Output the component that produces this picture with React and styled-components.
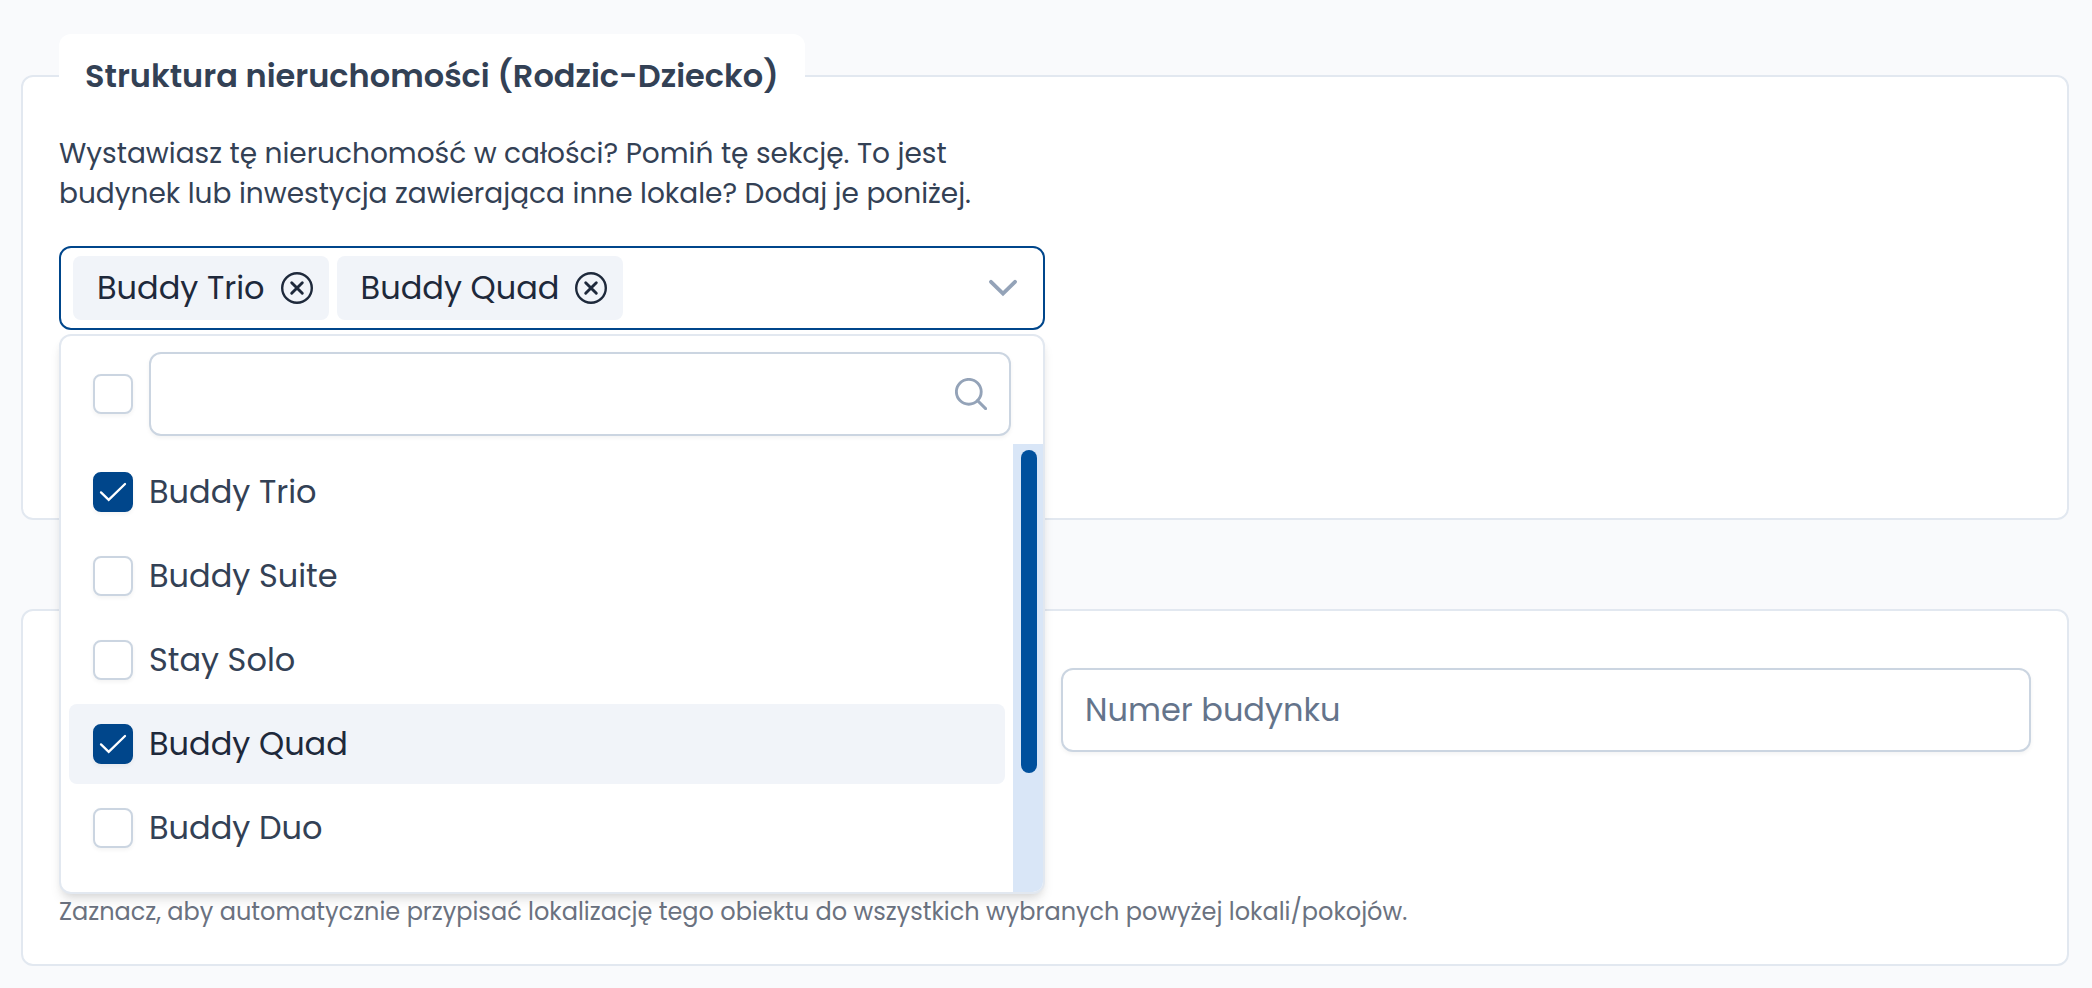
import React, { useState } from "react";
import styled, { createGlobalStyle, css } from "styled-components";

const c = {
  page: "#f9fafc",
  card: "#ffffff",
  line: "#e2e8f0",
  field: "#cbd5e1",
  primary: "#00468b",
  thumb: "#00509d",
  track: "#d9e6f7",
  soft: "#f1f4f9",
  text: "#334155",
  strong: "#1e293b",
  muted: "#64748b",
  help: "#6b7280",
  icon: "#94a3b8",
};

const GlobalStyle = createGlobalStyle`
  *, *::before, *::after { box-sizing: border-box; }
  body {
    margin: 0;
    background: ${c.page};
    color: ${c.text};
    font-family: Poppins, Inter, "Liberation Sans", sans-serif;
    font-size: 32px;
    line-height: 48px;
  }
  input, button { font: inherit; color: inherit; }
`;

const Page = styled.main`
  display: flex;
  flex-direction: column;
  gap: 89px;
  padding: 34px 23px 22px 21px;
`;

const cardFrame = css`
  margin: 0;
  min-width: 0;
  background: ${c.card};
  border: 2px solid ${c.line};
  border-radius: 12px;
`;

const Fieldset = styled.fieldset`
  ${cardFrame}
  padding: 16px 36px 36px;
`;

const Legend = styled.legend`
  padding: 18px 26px;
  border-radius: 12px;
  background: ${c.card};
  font-weight: 600;
`;

const StructureBody = styled.div`
  display: flex;
  flex-direction: column;
  gap: 32px;
  width: 50%;
  min-height: 348px;
`;

const Intro = styled.p`
  margin: 0;
  font-size: 28px;
  line-height: 40px;
`;

const MultiSelect = styled.div`
  position: relative;
`;

const SelectBox = styled.div`
  display: flex;
  align-items: center;
  height: 84px;
  padding-left: 12px;
  border: 2px solid ${c.primary};
  border-radius: 12px;
  background: ${c.card};
`;

const Chips = styled.div`
  display: flex;
  flex: 1;
  gap: 8px;
`;

const Chip = styled.span`
  display: flex;
  align-items: center;
  gap: 16px;
  padding: 8px 16px 8px 24px;
  border-radius: 8px;
  background: ${c.soft};
  color: ${c.strong};
  white-space: nowrap;
`;

const IconButton = styled.button`
  display: flex;
  align-items: center;
  justify-content: center;
  width: ${(p) => p.$width};
  padding: 0;
  border: 0;
  background: none;
  color: ${(p) => p.$color};
  cursor: pointer;
`;

const Panel = styled.div`
  position: absolute;
  z-index: 2;
  top: 100%;
  left: 0;
  right: 0;
  margin-top: 4px;
  overflow: hidden;
  border: 2px solid ${c.line};
  border-radius: 12px;
  background: ${c.card};
  box-shadow: 0 8px 12px -2px rgba(0, 0, 0, 0.1), 0 4px 8px -4px rgba(0, 0, 0, 0.1);
`;

const PanelHeader = styled.div`
  display: flex;
  align-items: center;
  gap: 16px;
  padding: 16px 32px 8px;
`;

const TextInput = styled.input`
  width: 100%;
  height: 84px;
  padding: 0 22px;
  border: 2px solid ${c.field};
  border-radius: 12px;
  background: ${c.card};
  box-shadow: 0 2px 4px rgba(18, 18, 23, 0.05);
  outline: none;

  &::placeholder {
    color: ${c.muted};
    opacity: 1;
  }
`;

const SearchField = styled.div`
  display: grid;
  flex: 1;
  align-items: center;

  > * { grid-area: 1 / 1; }

  > svg {
    justify-self: end;
    margin-right: 24px;
    color: ${c.icon};
    pointer-events: none;
  }
`;

const ListArea = styled.div`
  display: flex;
  height: 448px;
`;

const Options = styled.ul`
  display: flex;
  flex: 1;
  flex-direction: column;
  gap: 4px;
  margin: 0;
  padding: 8px;
  list-style: none;
`;

const Option = styled.label`
  display: flex;
  align-items: center;
  gap: 16px;
  height: 80px;
  padding: 0 24px;
  border-radius: 8px;
  background: ${(p) => (p.$focused ? c.soft : "transparent")};
  color: ${(p) => (p.$focused ? c.strong : c.text)};
  cursor: pointer;
`;

const Track = styled.div`
  width: 30px;
  padding: 6px 6px 6px 8px;
  background: ${c.track};
`;

const Thumb = styled.div`
  height: 74%;
  border-radius: 8px;
  background: ${c.thumb};
`;

const TickFrame = styled.span`
  display: grid;
  flex: none;
  place-items: center;

  > * { grid-area: 1 / 1; }

  > svg {
    color: ${c.card};
    pointer-events: none;
  }
`;

const Tick = styled.input`
  appearance: none;
  width: 40px;
  height: 40px;
  margin: 0;
  border: 2px solid ${c.field};
  border-radius: 8px;
  background: ${c.card};
  box-shadow: 0 2px 4px rgba(18, 18, 23, 0.05);
  cursor: pointer;

  &:checked {
    border-color: ${c.primary};
    background: ${c.primary};
  }
`;

const AddressCard = styled.section`
  ${cardFrame}
  padding: 57px 36px 34px;
`;

const FieldGrid = styled.div`
  display: grid;
  grid-template-columns: 1fr 1fr;
  gap: 32px;
`;

const SecondColumn = styled.div`
  grid-column: 2;
`;

const Help = styled.p`
  margin: 142px 0 0;
  color: ${c.help};
  font-size: 24px;
  line-height: 36px;
`;

const svgProps = {
  fill: "none",
  stroke: "currentColor",
  strokeLinecap: "round",
  "aria-hidden": true,
};

const RemoveIcon = () => (
  <svg width="32" height="32" viewBox="0 0 32 32" {...svgProps}>
    <circle cx="16" cy="16" r="14.8" strokeWidth="2.4" />
    <path d="M10.7 10.7 21.3 21.3M21.3 10.7 10.7 21.3" strokeWidth="2.9" />
  </svg>
);

const ChevronIcon = () => (
  <svg width="28" height="28" viewBox="0 0 28 28" {...svgProps} strokeWidth="3.8">
    <path d="M2 7.8 14 19.6 26 7.8" />
  </svg>
);

const SearchIcon = () => (
  <svg width="32" height="32" viewBox="0 0 32 32" {...svgProps} strokeWidth="2.9">
    <circle cx="13.8" cy="13.8" r="12.4" />
    <path d="M22.6 22.6 30.6 30.6" />
  </svg>
);

const CheckIcon = () => (
  <svg width="28" height="28" viewBox="0 0 28 28" {...svgProps} strokeWidth="2.3">
    <path d="M2 14.4 9.7 21.8 26 6" />
  </svg>
);

function Checkbox(props) {
  return (
    <TickFrame>
      <Tick type="checkbox" {...props} />
      {props.checked && <CheckIcon />}
    </TickFrame>
  );
}

const units = ["Buddy Trio", "Buddy Suite", "Stay Solo", "Buddy Quad", "Buddy Duo"];

export default function App() {
  const [selected, setSelected] = useState(["Buddy Trio", "Buddy Quad"]);
  const [open, setOpen] = useState(true);
  const [focused, setFocused] = useState("Buddy Quad");

  const toggle = (unit) => {
    setFocused(unit);
    setSelected((list) =>
      list.includes(unit) ? list.filter((u) => u !== unit) : [...list, unit]
    );
  };
  const all = selected.length === units.length;

  return (
    <>
      <GlobalStyle />
      <Page>
        <Fieldset>
          <Legend>Struktura nieruchomości (Rodzic-Dziecko)</Legend>
          <StructureBody>
            <Intro>
              Wystawiasz tę nieruchomość w całości? Pomiń tę sekcję. To jest
              budynek lub inwestycja zawierająca inne lokale? Dodaj je poniżej.
            </Intro>
            <MultiSelect>
              <SelectBox>
                <Chips>
                  {selected.map((unit) => (
                    <Chip key={unit}>
                      {unit}
                      <IconButton
                        type="button"
                        $width="32px"
                        $color={c.strong}
                        aria-label={`Usuń ${unit}`}
                        onClick={() => toggle(unit)}
                      >
                        <RemoveIcon />
                      </IconButton>
                    </Chip>
                  ))}
                </Chips>
                <IconButton
                  type="button"
                  $width="80px"
                  $color={c.icon}
                  aria-label="Lista lokali"
                  aria-expanded={open}
                  onClick={() => setOpen(!open)}
                >
                  <ChevronIcon />
                </IconButton>
              </SelectBox>
              {open && (
                <Panel>
                  <PanelHeader>
                    <Checkbox
                      aria-label="Zaznacz wszystkie"
                      checked={all}
                      onChange={() => setSelected(all ? [] : units)}
                    />
                    <SearchField>
                      <TextInput type="text" aria-label="Szukaj" />
                      <SearchIcon />
                    </SearchField>
                  </PanelHeader>
                  <ListArea>
                    <Options>
                      {units.map((unit) => (
                        <li key={unit}>
                          <Option $focused={unit === focused}>
                            <Checkbox
                              checked={selected.includes(unit)}
                              onChange={() => toggle(unit)}
                            />
                            {unit}
                          </Option>
                        </li>
                      ))}
                    </Options>
                    <Track aria-hidden="true">
                      <Thumb />
                    </Track>
                  </ListArea>
                </Panel>
              )}
            </MultiSelect>
          </StructureBody>
        </Fieldset>

        <AddressCard>
          <FieldGrid>
            <SecondColumn>
              <TextInput type="text" aria-label="Numer budynku" placeholder="Numer budynku" />
            </SecondColumn>
          </FieldGrid>
          <Help>
            Zaznacz, aby automatycznie przypisać lokalizację tego obiektu do
            wszystkich wybranych powyżej lokali/pokojów.
          </Help>
        </AddressCard>
      </Page>
    </>
  );
}
